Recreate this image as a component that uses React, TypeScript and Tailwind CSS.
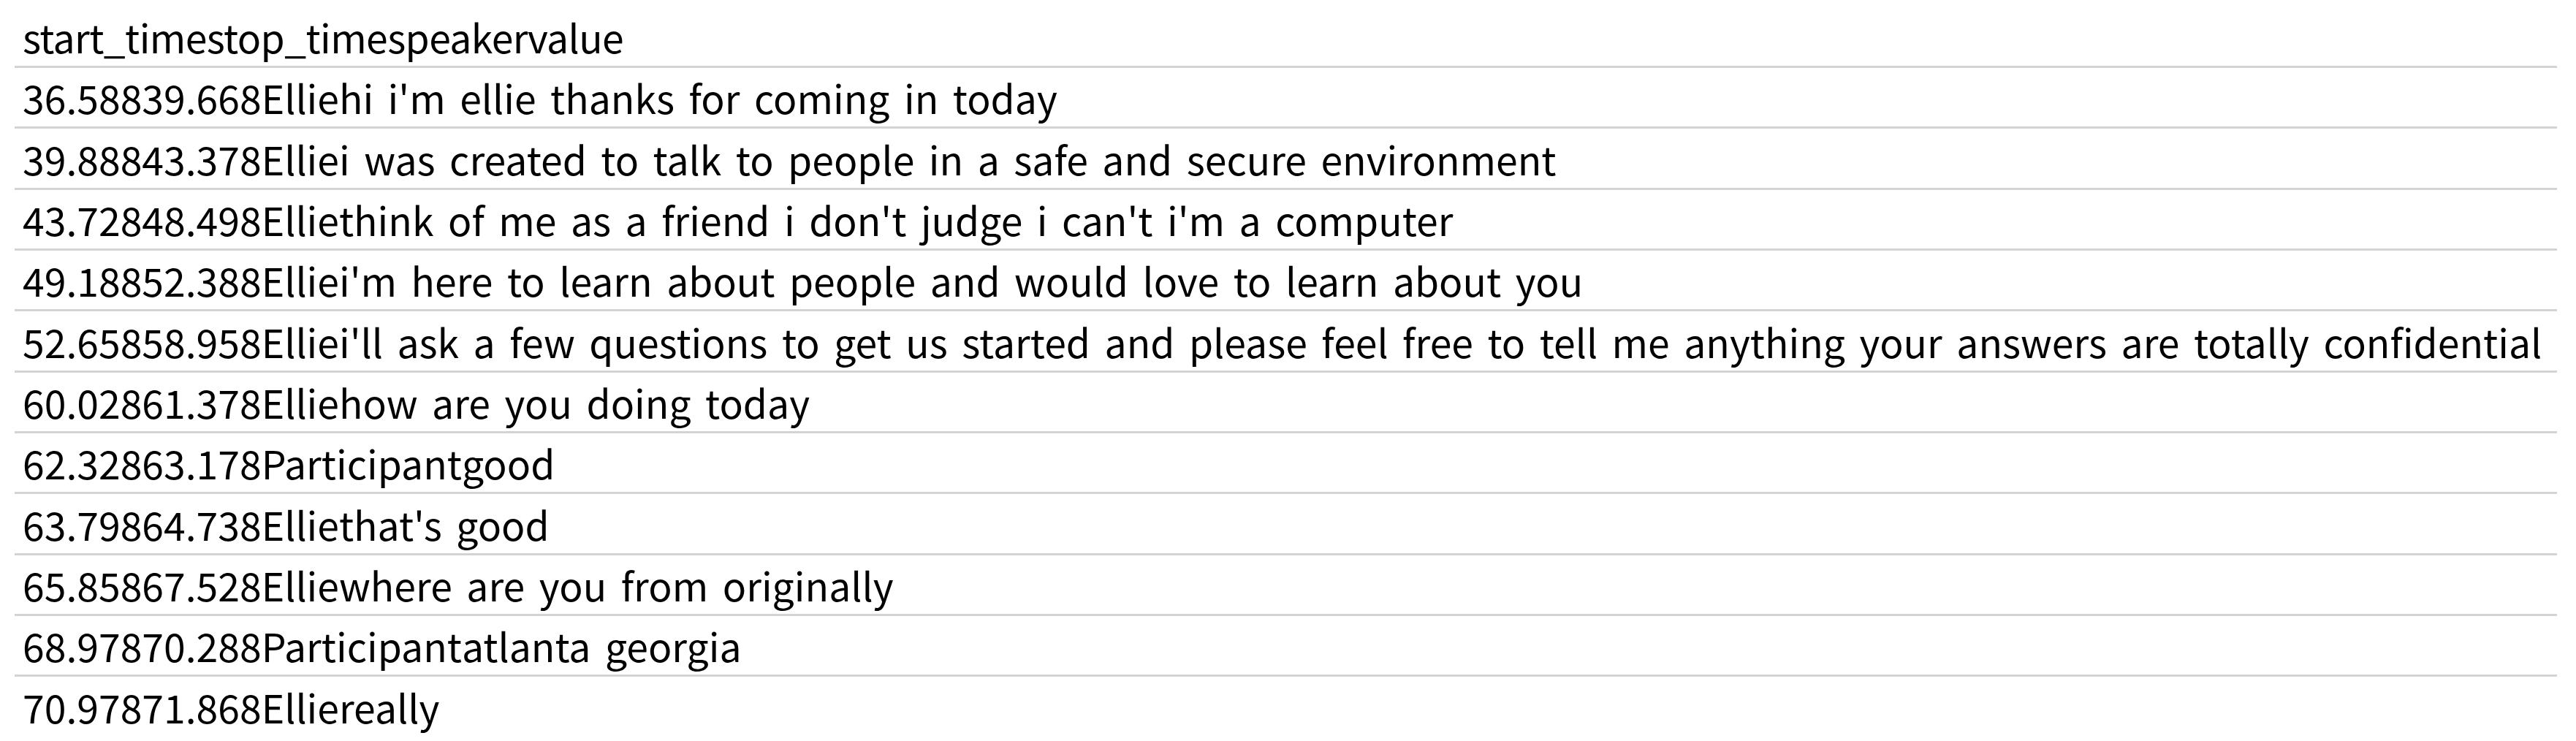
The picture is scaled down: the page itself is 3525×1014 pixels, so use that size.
import React from "react";

const header = ["start_time", "stop_time", "speaker", "value"];

const rows: [string, string, string, string][] = [
  ["36.588", "39.668", "Ellie", "hi i'm ellie thanks for coming in today"],
  ["39.888", "43.378", "Ellie", "i was created to talk to people in a safe and secure environment"],
  ["43.728", "48.498", "Ellie", "think of me as a friend i don't judge i can't i'm a computer"],
  ["49.188", "52.388", "Ellie", "i'm here to learn about people and would love to learn about you"],
  [
    "52.658",
    "58.958",
    "Ellie",
    "i'll ask a few questions to get us started and please feel free to tell me anything your answers are totally confidential",
  ],
  ["60.028", "61.378", "Ellie", "how are you doing today"],
  ["62.328", "63.178", "Participant", "good"],
  ["63.798", "64.738", "Ellie", "that's good"],
  ["65.858", "67.528", "Ellie", "where are you from originally"],
  ["68.978", "70.288", "Participant", "atlanta georgia"],
  ["70.978", "71.868", "Ellie", "really"],
];

export default function App() {
  return (
    <div
      className="w-[3525px] h-[1014px] overflow-hidden bg-white text-black"
      style={{ fontFamily: '"Noto Sans CJK KR", "Noto Sans", sans-serif' }}
    >
      <div className="ml-[20px] w-[3479px] text-[53.5px] leading-none [word-spacing:7.5px]">
        <div className="h-[90px] pt-[10px] pl-[11px] flex items-center whitespace-nowrap tracking-[-0.6px]">
          {header.map((h, i) => (
            <span key={i}>{h}</span>
          ))}
        </div>
        {rows.map((r, i) => (
          <div
            key={i}
            className="h-[83.33px] border-t-[3px] border-[#d3d3d3] pl-[11px] flex items-center whitespace-nowrap"
          >
            {r.map((c, j) => (
              <span key={j}>{c}</span>
            ))}
          </div>
        ))}
      </div>
    </div>
  );
}
